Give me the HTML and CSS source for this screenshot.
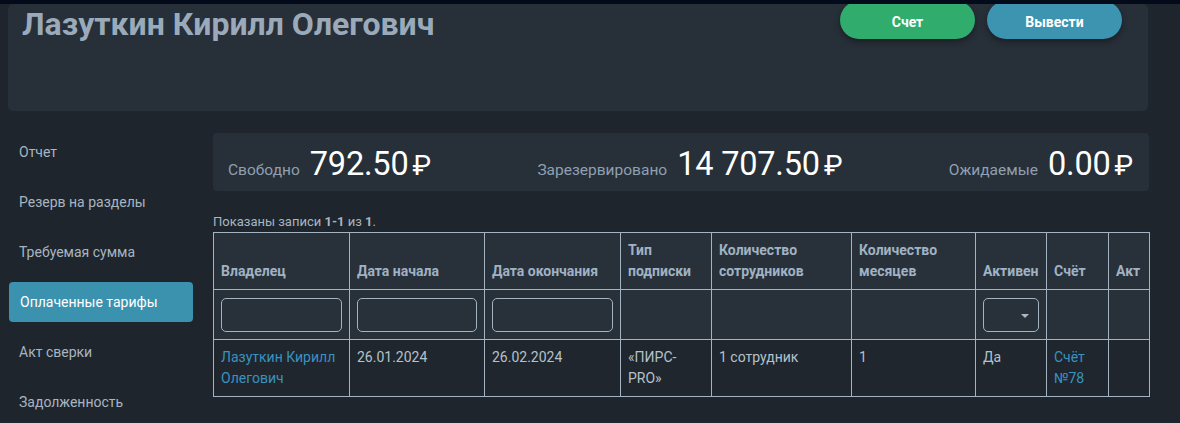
FILE: index.html
```html
<!DOCTYPE html>
<html lang="ru">
<head>
<meta charset="utf-8">
<title>Оплаченные тарифы</title>
<link rel="stylesheet" href="styles.css">
</head>
<body>
<div class="topline"></div>
<header class="head-card">
  <h1 class="title">Лазуткин Кирилл Олегович</h1>
  <div class="actions">
    <button class="btn btn-green">Счет</button>
    <button class="btn btn-blue">Вывести</button>
  </div>
</header>
<div class="main">
  <nav class="sidebar">
    <a class="nav-item">Отчет</a>
    <a class="nav-item">Резерв на разделы</a>
    <a class="nav-item">Требуемая сумма</a>
    <a class="nav-item active">Оплаченные тарифы</a>
    <a class="nav-item">Акт сверки</a>
    <a class="nav-item">Задолженность</a>
  </nav>
  <section class="content">
    <div class="balance">
      <div class="bal-group"><span class="bal-label">Свободно</span><span class="bal-value">792.50<span class="rub">₽</span></span></div>
      <div class="bal-group"><span class="bal-label">Зарезервировано</span><span class="bal-value">14 707.50<span class="rub">₽</span></span></div>
      <div class="bal-group"><span class="bal-label">Ожидаемые</span><span class="bal-value">0.00<span class="rub">₽</span></span></div>
    </div>
    <div class="summary">Показаны записи <b>1-1</b> из <b>1</b>.</div>
    <table class="grid">
      <colgroup>
        <col class="c1"><col class="c2"><col class="c3"><col class="c4"><col class="c5"><col class="c6"><col class="c7"><col class="c8"><col class="c9">
      </colgroup>
      <thead>
        <tr class="head-row">
          <th>Владелец</th>
          <th>Дата начала</th>
          <th>Дата окончания</th>
          <th>Тип<br>подписки</th>
          <th>Количество<br>сотрудников</th>
          <th>Количество<br>месяцев</th>
          <th>Активен</th>
          <th>Счёт</th>
          <th>Акт</th>
        </tr>
        <tr class="filter-row">
          <td><input class="filter-input" type="text"></td>
          <td><input class="filter-input" type="text"></td>
          <td><input class="filter-input" type="text"></td>
          <td></td>
          <td></td>
          <td></td>
          <td><div class="filter-select"><span class="caret"></span></div></td>
          <td></td>
          <td></td>
        </tr>
      </thead>
      <tbody>
        <tr class="data-row">
          <td><a class="link">Лазуткин Кирилл Олегович</a></td>
          <td>26.01.2024</td>
          <td>26.02.2024</td>
          <td>«ПИРС-PRO»</td>
          <td>1 сотрудник</td>
          <td>1</td>
          <td>Да</td>
          <td><a class="link">Счёт №78</a></td>
          <td></td>
        </tr>
      </tbody>
    </table>
  </section>
</div>
</body>
</html>
```
FILE: styles.css
```css
* { box-sizing: border-box; }
html, body { margin: 0; padding: 0; }
body {
  background: #1e252c;
  font-family: Roboto, "Noto Sans", "Liberation Sans", sans-serif;
  color: #a8b5c1;
  width: 1180px;
  height: 423px;
  overflow: hidden;
}
.topline {
  position: fixed;
  top: 0; left: 0; right: 0;
  height: 4px;
  background: #030a19;
  z-index: 10;
}
.head-card {
  margin: 4px 32px 0 8px;
  height: 107px;
  background: #272f38;
  border-radius: 5px;
  display: flex;
  justify-content: space-between;
  align-items: flex-start;
  padding: 0 26px 0 14px;
}
.title {
  margin: 1px 0 0 0;
  font-size: 32px;
  line-height: 38px;
  font-weight: 700;
  color: #9aaaba;
}
.actions {
  display: flex;
  gap: 12px;
  margin-top: -3px;
}
.btn {
  width: 135px;
  height: 38px;
  border: 0;
  border-radius: 19px;
  font-family: inherit;
  font-size: 14px;
  font-weight: 700;
  color: #ffffff;
  box-shadow: 0 3px 6px rgba(0, 0, 0, 0.35);
  padding: 3px 0 0 0;
}
.btn-green { background: #30ad6d; }
.btn-blue { background: #3d94b1; }

.main {
  display: flex;
  gap: 20px;
  padding: 21px 31px 0 9px;
}
.sidebar {
  width: 184px;
  flex: none;
  display: flex;
  flex-direction: column;
  gap: 10px;
}
.nav-item {
  display: block;
  height: 40px;
  line-height: 40px;
  padding: 0 10px;
  font-size: 14px;
  color: #a8b5c1;
  border-radius: 4px;
}
.nav-item.active {
  background: #3a92ae;
  color: #ffffff;
  padding-left: 11px;
}
.content {
  flex: 1;
  min-width: 0;
  padding-top: 1px;
}
.balance {
  height: 58px;
  background: #272f38;
  border-radius: 4px;
  display: flex;
  justify-content: space-between;
  align-items: center;
  padding: 3px 16px 0 15px;
}
.bal-group {
  display: flex;
  align-items: baseline;
  gap: 10px;
}
.bal-label {
  font-size: 15.5px;
  color: #8fa0b0;
}
.bal-value {
  font-size: 32.5px;
  font-weight: 400;
  color: #ffffff;
  letter-spacing: -0.2px;
}
.rub {
  margin-left: 4px;
  font-size: 28px;
}
.summary {
  margin: 21px 0 1px 0;
  font-size: 13px;
  line-height: 19px;
  color: #a8b5c1;
}
.summary b { font-weight: 700; }

.grid {
  width: 936px;
  border-collapse: collapse;
  table-layout: fixed;
  font-size: 14px;
}
.c1 { width: 136px; }
.c2 { width: 135px; }
.c3 { width: 136px; }
.c4 { width: 91px; }
.c5 { width: 140px; }
.c6 { width: 124px; }
.c7 { width: 71px; }
.c8 { width: 62px; }
.c9 { width: 41px; }
.grid th, .grid td {
  border: 1px solid #a3b3c2;
  text-align: left;
}
.head-row th {
  background: #28313a;
  color: #a0b2c3;
  font-weight: 700;
  line-height: 21px;
  padding: 7px 7px 7px 7px;
  vertical-align: bottom;
  height: 57px;
}
.filter-row td {
  background: #28313a;
  padding: 7px 7px;
  height: 50px;
}
.filter-input {
  display: block;
  width: 100%;
  height: 34px;
  border: 1px solid #a3b3c2;
  border-radius: 5px;
  background: transparent;
  color: #c0ccd7;
  font: inherit;
}
.filter-select {
  position: relative;
  width: 56px;
  height: 34px;
  border: 1px solid #a3b3c2;
  border-radius: 5px;
}
.caret {
  position: absolute;
  right: 9px;
  top: 15px;
  width: 0;
  height: 0;
  border-left: 4px solid transparent;
  border-right: 4px solid transparent;
  border-top: 4px solid #a9b9c8;
}
.data-row td {
  background: #1f262d;
  color: #b5c1cc;
  line-height: 21px;
  padding: 7px 7px;
  vertical-align: top;
  height: 57px;
}
.link {
  color: #3a92c1;
  text-decoration: none;
}
```
